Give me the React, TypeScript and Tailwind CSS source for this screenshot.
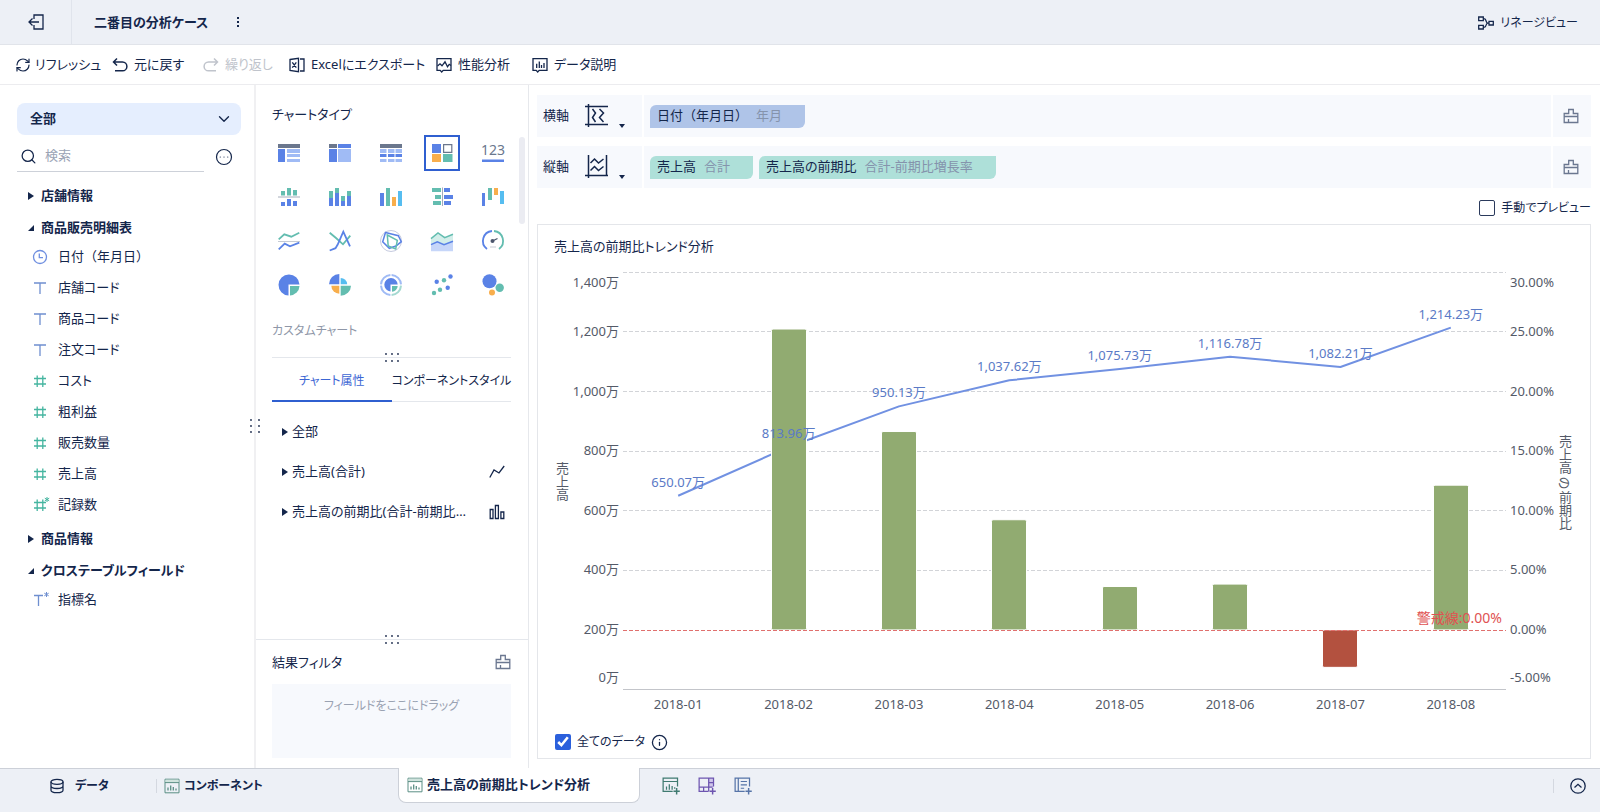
import React from 'react';
import { ChevronDown, CircleEllipsis, Info, RefreshCw, Search } from 'lucide-react';

const BLUE = '#5a82e6';
const LIGHT = '#a0bbf5';
const TEAL = '#63bdb0';
const ORANGE = '#f8ae4c';
const SKY = '#56bdf0';
const GREY = '#6b778d';

type IconProps = { children: React.ReactNode; size?: number; className?: string };

function Icon({ children, size = 16, className = '' }: IconProps) {
  return (
    <svg
      width={size}
      height={size}
      viewBox="0 0 16 16"
      fill="none"
      stroke="currentColor"
      strokeWidth="1.3"
      className={`shrink-0 ${className}`}
      aria-hidden="true">
      {children}
    </svg>
  );
}

const ExitIcon = () => (
  <Icon>
    <path d="M6 5V1h9v14H6v-4M1 8h10M4.500 4.500L1 8l3.500 3.500" />
  </Icon>
);

const LineageIcon = () => (
  <Icon>
    <path d="M.7 2h4.600v3.600H.7zM.7 10.400h4.600V14H.7zM11 6.400h4.300v3.600H11zM5.300 3.800h1.400c1.400 0 1.200 4.300 3 4.300H11M5.300 12.200h1.400c1.400 0 1.200-4.100 3-4.100" />
  </Icon>
);

const UndoIcon = ({ className = '' }: { className?: string }) => (
  <Icon className={className}>
    <path d="M5 1.500L1.500 5 5 8.500M1.500 5h9a4.300 4.300 0 0 1 0 8.800H3" strokeWidth="1.500" />
  </Icon>
);

const ExcelIcon = () => (
  <Icon>
    <path d="M1 2.500l8.500-1.200v13.400L1 13.500zM3.300 5.300l4 5.400M7.300 5.300l-4 5.400M11 2h4v12h-4" />
  </Icon>
);

const PerformanceIcon = () => (
  <Icon>
    <path d="M1 1.700h14v11.600H7.200L5.700 15l-1.500-1.700H1z" />
    <path d="M1.500 9l2.500-2.200 2 2L9 4.800l2.500 5 1.700-2.500L15 8.500" />
  </Icon>
);

const DataNoteIcon = () => (
  <Icon>
    <path d="M1 1.700h14v11.600H7.200L5.700 15l-1.500-1.700H1zM4.700 6.700V11M7.300 4.500V11M9.500 8v3M12 6v5" />
  </Icon>
);

const BrushIcon = () => (
  <Icon className="text-[#6b7790]">
    <path d="M1.200 14.500V5.500h4.500v-4h4.600v4h4.500v9zM1.200 8.500h13.600M5.500 11v3.500" />
  </Icon>
);

const ClockIcon = () => (
  <Icon className="text-[#6f8fe0]">
    <circle cx="8" cy="8" r="6.500" />
    <path d="M7.300 4.500v4.200H11" />
  </Icon>
);

const TextIcon = ({ star }: { star?: boolean }) => (
  <Icon className="overflow-visible text-[#6f8fd0]">
    <path d={star ? 'M2 3.500h9M6.500 3.500V14' : 'M2 3h12M8 3v11'} />
    {star && <path d="M14.500 0v5M12.300 1.200l4.400 2.600M16.700 1.200l-4.400 2.600" strokeWidth="1" />}
  </Icon>
);

const NumberIcon = ({ star }: { star?: boolean }) => (
  <Icon className="overflow-visible text-[#45b5a0]">
    <path d="M5.200 2.500v11.500M10.800 2.500v11.500M2 5.500h12M2 11h12" />
    {star && <path d="M15 0v5M12.800 1.200l4.400 2.600M17.200 1.200l-4.400 2.600" strokeWidth="1" />}
  </Icon>
);

const DatabaseIcon = () => (
  <Icon>
    <ellipse cx="8" cy="3.800" rx="6" ry="2.500" />
    <path d="M2 3.800v8.400c0 3.300 12 3.300 12 0V3.800M2 8c0 3.300 12 3.300 12 0" />
  </Icon>
);

const ComponentIcon = () => (
  <Icon className="text-[#5b8f85]">
    <path d="M1 1.200h14v13.600H1z" strokeWidth="1" />
    <path d="M1.500 1.700h13v2.600h-13z" fill="#cfe3dd" stroke="none" />
    <path d="M1 4.600h14" strokeWidth="1" />
    <path d="M4 9.500v3M6.700 7.500v5M9.300 9v3.500M12 10.500v2" />
  </Icon>
);

const AddComponentIcon = () => (
  <Icon size={18} className="text-[#3f7a70]">
    <path d="M9.500 12.800H1V1h12.800v7.500M1 4h12.800M4 8.500v2.800M6.500 6.500v4.800M9 8v3.300M11.300 9v1.500" strokeWidth="1.100" />
    <path d="M13 9.800v5.700M10.200 12.600h5.600" />
  </Icon>
);

const AddDashboardIcon = () => (
  <Icon size={18} className="text-[#6d55b0]">
    <path d="M9.500 1h4.300v8H9.500z" fill="#cfc6ea" stroke="none" />
    <path d="M9.500 12.800H1V1h12.800v7.500M1 9h12M9.500 1v11.500M9.500 5h4M5 9v3.800" strokeWidth="1.100" />
    <path d="M13 9.800v5.700M10.200 12.600h5.600" />
  </Icon>
);

const AddReportIcon = () => (
  <Icon size={18} className="text-[#5674a8]">
    <path d="M9.500 12.800H1V1h12.800v7.500M3.800 1v11.800M6 4h5.500M6 7h5.500M6 10h3" strokeWidth="1.100" />
    <path d="M13 9.800v5.700M10.200 12.600h5.600" />
  </Icon>
);

// one drawing per entry of the chart type palette, on a 22 x 22 field
const chartTypes: { name: string; art: React.ReactNode }[] = [
  {
    name: 'グループ表',
    art: (
      <>
        <path fill={GREY} d="M0 2h22v4H0z" />
        <path fill={BLUE} d="M0 7h7v13H0z" />
        <path fill={LIGHT} d="M9 7h13v4H9zM9 12h13v3H9zM9 17h13v3H9z" />
      </>
    ),
  },
  {
    name: 'クロス表',
    art: (
      <>
        <path fill={GREY} d="M0 2h8v4H0z" />
        <path fill={BLUE} d="M9 2h13v4H9zM0 7h8v13H0z" />
        <path fill={LIGHT} d="M9 7h13v13H9z" />
      </>
    ),
  },
  {
    name: '明細表',
    art: (
      <>
        <path fill={GREY} d="M0 2h22v4H0z" />
        <path fill={LIGHT} d="M0 7h6.500v4H0zM8 7h6.500v4H8zM15.500 7H22v4h-6.500zM0 17h6.500v3H0zM8 17h6.500v3H8zM15.500 17H22v3h-6.500z" />
        <path fill={BLUE} d="M0 12h6.500v3H0zM8 12h6.500v3H8zM15.500 12H22v3h-6.500z" />
      </>
    ),
  },
  {
    name: 'カスタム',
    art: (
      <>
        <path fill={BLUE} d="M1 2h9v9H1z" />
        <path fill="#fff" stroke={GREY} strokeWidth="1.200" d="M12.600 2.600h8.200v7.800h-8.200z" />
        <path fill={ORANGE} d="M1 12h9v8H1z" />
        <path fill={TEAL} d="M12 12h9.500v8H12z" />
      </>
    ),
  },
  {
    name: '指標カード',
    art: (
      <>
        <text x="11" y="13" textAnchor="middle" fontSize="14" fill={GREY}>
          123
        </text>
        <path fill={BLUE} d="M0 17.500h22v2.500H0z" />
      </>
    ),
  },
  {
    name: '対称棒グラフ',
    art: (
      <>
        <path fill={TEAL} d="M3 5h4v4.500H3zM9 2h4v7.500H9zM15 4h4v5.500h-4z" />
        <path fill="#a4acbb" d="M0 10.500h22v1H0z" />
        <path fill={BLUE} d="M3 16h4v4H3zM9 13h4v7H9zM15 15h4v5h-4z" />
      </>
    ),
  },
  {
    name: '積上げ棒グラフ',
    art: (
      <>
        <path fill={TEAL} d="M0 5h4v7H0zM6 2h4v5H6zM12 10h4v5h-4zM18 5h4v5h-4z" />
        <path fill={BLUE} d="M0 12h4v8H0zM6 7h4v13H6zM12 15h4v5h-4zM18 10h4v10h-4z" />
      </>
    ),
  },
  {
    name: '棒グラフ',
    art: (
      <>
        <path fill={BLUE} d="M0 7h4v13H0z" />
        <path fill={TEAL} d="M6 2h4v18H6z" />
        <path fill={ORANGE} d="M12 11h4v9h-4z" />
        <path fill={SKY} d="M18 5h4v15h-4z" />
      </>
    ),
  },
  {
    name: '双方向グラフ',
    art: (
      <>
        <path fill={TEAL} d="M1 2h9v4H1zM4 9h6v4H4zM2 15h8v4H2z" />
        <path fill="#a4acbb" d="M11 1.500h1v18.500h-1z" />
        <path fill={BLUE} d="M13 2h6v4h-6zM13 9h9v4h-9zM13 15h7v4h-7z" />
      </>
    ),
  },
  {
    name: '範囲棒グラフ',
    art: (
      <>
        <path fill={BLUE} d="M0 7h3v13H0z" />
        <path fill={TEAL} d="M6 2h4v12H6z" />
        <path fill={ORANGE} d="M12 2h4v7h-4z" />
        <path fill={SKY} d="M18 5h4v13h-4z" />
      </>
    ),
  },
  {
    name: '折れ線グラフ',
    art: (
      <g fill="none" strokeWidth="1.800">
        <path stroke={TEAL} d="M.7 9.300l5.600-5 7 2.400 8-4" />
        <path stroke="#c6cbd4" strokeWidth="1" d="M0 11.500h22" />
        <path stroke={BLUE} d="M.7 19.300l6-5.600 5.300 2.600 9.300-3.600" />
      </g>
    ),
  },
  {
    name: '曲線グラフ',
    art: (
      <g fill="none" strokeWidth="1.800">
        <path stroke={TEAL} d="M.7 2.700L7 8l7 6.300 7.300-8.600" />
        <path stroke={BLUE} d="M.7 20.500l5.800-2.300 2.200-3.700 5.600-12.800L21 16.300" />
      </g>
    ),
  },
  {
    name: 'レーダー',
    art: (
      <g fill="none" strokeWidth="1.500">
        <circle cx="11" cy="11" r="10.500" stroke="#c6cbe0" strokeWidth="1" />
        <path stroke={BLUE} d="M5.500 2.500l12.800 3.200 3 6-5.300 4.300-6.700 2.300-6.600-6.600z" />
        <path stroke={TEAL} d="M7.300 5l10 5.300-1.600 8.700-7.500-3z" />
      </g>
    ),
  },
  {
    name: 'エリア',
    art: (
      <>
        <path fill="#d3eeea" d="M0 8.600L7 3l6.700 4.700L22 4.300V15H0z" />
        <path fill="#c6d6f9" d="M0 14.600l6.300-2.900 6.700 3 9-3.400v10H0z" />
        <path fill="none" stroke={TEAL} strokeWidth="1.500" d="M0 8.600L7 3l6.700 4.700L22 4.300" />
        <path fill="none" stroke={BLUE} strokeWidth="1.500" d="M0 14.600l6.300-2.900 6.700 3 9-3.400" />
      </>
    ),
  },
  {
    name: 'ゲージ',
    art: (
      <>
        <g fill="none" strokeWidth="1.800">
          <path stroke={BLUE} d="M5 19A10 10 0 0 1 10 1" />
          <path stroke={TEAL} d="M12 1a10 10 0 0 1 5 18" />
          <path stroke="#c6cbd4" strokeWidth="1" d="M8 17h6" />
        </g>
        <circle cx="10.500" cy="11" r="2" fill="#4b566c" />
        <path stroke="#4b566c" strokeWidth="1.300" d="M10.500 11l5-2.500" />
      </>
    ),
  },
  {
    name: '円グラフ',
    art: (
      <>
        <path fill={BLUE} d="M10.500 21.500A10.500 10.500 0 1 1 21.500 10.500h-11z" />
        <path fill={TEAL} d="M12 12h9.500a10 10 0 0 1-9.500 9.500z" />
      </>
    ),
  },
  {
    name: 'ローズ',
    art: (
      <>
        <path fill={BLUE} d="M10.300 10.300H0A10.300 10.300 0 0 1 10.300 0z" />
        <path fill={SKY} d="M11.700 10.300V4a6.500 6.500 0 0 1 6.500 6.300z" />
        <path fill={TEAL} d="M11.700 11.700H22a10.300 10.300 0 0 1-10.300 10z" />
        <path fill={ORANGE} d="M10.300 11.700v8a8 8 0 0 1-8-8z" />
      </>
    ),
  },
  {
    name: '多層円グラフ',
    art: (
      <>
        <g fill="none" strokeWidth="2">
          <path stroke={LIGHT} d="M10.400 21A10 10 0 0 1 1 11.600M1 10.400A10 10 0 0 1 10.400 1M11.600 1A10 10 0 0 1 21 10.400" />
          <path stroke="#a5d9d1" d="M21 11.600A10 10 0 0 1 11.600 21" />
        </g>
        <path fill={BLUE} d="M10.500 17.500A6.700 6.700 0 1 1 17.700 10.500h-7.200z" />
        <path fill={TEAL} d="M12 12h5.700a6 6 0 0 1-5.700 5.700z" />
      </>
    ),
  },
  {
    name: '散布図',
    art: (
      <>
        <g fill={BLUE}>
          <circle cx="19.500" cy="2.500" r="2.200" />
          <circle cx="5.700" cy="7.700" r="2.200" />
          <circle cx="16.700" cy="13.700" r="2.200" />
        </g>
        <g fill={TEAL}>
          <circle cx="13" cy="6.300" r="2.200" />
          <circle cx="9" cy="15.700" r="2.200" />
          <circle cx="3" cy="19" r="2.200" />
        </g>
      </>
    ),
  },
  {
    name: 'バブル',
    art: (
      <>
        <circle cx="7.500" cy="7.300" r="7" fill={BLUE} />
        <circle cx="17.700" cy="13.700" r="4.200" fill={TEAL} />
        <circle cx="10" cy="18.500" r="3" fill={ORANGE} />
      </>
    ),
  },
];

// full-width parentheses keep their full advance
const DateLabel = () => <span className="[font-feature-settings:normal]">日付（年月日）</span>;

type Field = { key: string; label?: React.ReactNode; icon: React.ReactNode };

const fieldGroups: { label: string; fields: Field[] }[] = [
  { label: '店舗情報', fields: [] },
  {
    label: '商品販売明細表',
    fields: [
      { key: '日付', label: <DateLabel />, icon: <ClockIcon /> },
      { key: '店舗コード', icon: <TextIcon /> },
      { key: '商品コード', icon: <TextIcon /> },
      { key: '注文コード', icon: <TextIcon /> },
      { key: 'コスト', icon: <NumberIcon /> },
      { key: '粗利益', icon: <NumberIcon /> },
      { key: '販売数量', icon: <NumberIcon /> },
      { key: '売上高', icon: <NumberIcon /> },
      { key: '記録数', icon: <NumberIcon star /> },
    ],
  },
  { label: '商品情報', fields: [] },
  { label: 'クロステーブルフィールド', fields: [{ key: '指標名', icon: <TextIcon star /> }] },
];

function Caret({ open }: { open?: boolean }) {
  return (
    <svg width="8" height="8" viewBox="0 0 8 8" fill="currentColor" className="shrink-0" aria-hidden="true">
      <path d={open ? 'M6 1v6H0z' : 'M0 0l6 4-6 4z'} />
    </svg>
  );
}

function Grip({ vertical }: { vertical?: boolean }) {
  const dots = vertical
    ? [[1, 1], [9, 1], [1, 7], [9, 7], [1, 13], [9, 13]]
    : [[1, 1], [7, 1], [13, 1], [1, 8], [7, 8], [13, 8]];
  return (
    <svg width={vertical ? 10 : 14} height={vertical ? 14 : 9} fill="#1b2b4d" aria-hidden="true">
      {dots.map(([x, y]) => (
        <circle key={`${x}-${y}`} cx={x} cy={y} r="0.900" />
      ))}
    </svg>
  );
}

function Header() {
  return (
    <header className="flex h-[45px] shrink-0 items-center border-b border-[#e1e4ea] bg-[#edf0f6]">
      <button aria-label="戻る" className="flex h-full w-[72px] items-center justify-center border-r border-[#e0e4ec]">
        <ExitIcon />
      </button>
      <h1 className="ml-[22px] pt-0.5 font-bold">二番目の分析ケース</h1>
      <button aria-label="メニュー" className="ml-[18px] flex w-6 justify-center">
        <svg width="3" height="11" fill="currentColor" aria-hidden="true">
          <path d="M0 0h2v2H0zM0 4h2v2H0zM0 8h2v2H0z" />
        </svg>
      </button>
      <button className="mr-[22px] ml-auto flex items-center gap-1.5 pt-0.5 text-xs">
        <LineageIcon />
        リネージビュー
      </button>
    </header>
  );
}

function Toolbar() {
  return (
    <nav className="flex h-10 shrink-0 items-center border-b border-[#ececef] px-[15px] whitespace-nowrap">
      <button className="flex w-[97px] items-center gap-1">
        <RefreshCw size={16} strokeWidth={1.8} />
        リフレッシュ
      </button>
      <button className="flex w-[91px] items-center gap-1.5">
        <UndoIcon />
        元に戻す
      </button>
      <button disabled className="flex w-[86px] items-center gap-1.5 text-[#c0c4cc]">
        <UndoIcon className="-scale-x-100" />
        繰り返し
      </button>
      <button className="flex w-[147px] items-center gap-1.5">
        <ExcelIcon />
        Excelにエクスポート
      </button>
      <button className="flex w-24 items-center gap-1.5">
        <PerformanceIcon />
        性能分析
      </button>
      <button className="flex items-center gap-1.5">
        <DataNoteIcon />
        データ説明
      </button>
    </nav>
  );
}

function FieldPanel() {
  return (
    <aside className="relative w-64 shrink-0 border-r-2 border-[#f0f0f2] pt-[18px] pr-[13px] pl-[17px]">
      <div className="relative">
        <select
          aria-label="テーブル"
          className="h-8 w-full appearance-none rounded-lg bg-[#e5eefe] px-[13px] font-bold">
          <option>全部</option>
        </select>
        <ChevronDown size={18} strokeWidth={1.8} className="pointer-events-none absolute top-[7px] right-2" />
      </div>
      <div className="mt-1 flex items-center justify-between pr-2">
        <label className="flex h-[33px] w-[187px] items-center gap-2 border-b border-[#cdd1d9] pt-0.5 pl-[3px]">
          <Search size={17} strokeWidth={1.8} className="shrink-0" />
          <input
            aria-label="検索"
            placeholder="検索"
            className="w-full bg-transparent outline-none placeholder:text-[#9aa3b5]"
          />
        </label>
        <button aria-label="その他" className="pt-0.5">
          <CircleEllipsis size={18} strokeWidth={1.6} />
        </button>
      </div>
      <div className="mt-[11px] pl-[11px]">
        {fieldGroups.map((group) => (
          <section key={group.label}>
            <button className="mt-1.5 flex h-[25px] items-center gap-[5px] font-bold">
              <Caret open={group.fields.length > 0} />
              {group.label}
            </button>
            <ul className="pt-px">
              {group.fields.map((field) => (
                <li key={field.key} className="flex h-[31px] items-center gap-[10px] pl-1">
                  {field.icon}
                  {field.label ?? field.key}
                </li>
              ))}
            </ul>
          </section>
        ))}
      </div>
      <div className="absolute top-[334px] -right-1.5">
        <Grip vertical />
      </div>
    </aside>
  );
}

function SettingsPanel() {
  return (
    <section className="flex w-[273px] shrink-0 flex-col border-r border-[#e6e8ec]">
      <div className="relative mr-[17px] ml-4 h-[273px] border-b border-[#e4e7ec] pt-[19px]">
        <h2 className="leading-5">チャートタイプ</h2>
        <div className="-ml-[9px] grid w-[256px] grid-cols-5 gap-y-2 pt-[11px]">
          {chartTypes.map((type) => (
            <button
              key={type.name}
              title={type.name}
              aria-label={type.name}
              className={
                type.name === 'カスタム'
                  ? 'mx-auto flex size-9 items-center justify-center border-2 border-[#2f5fd0]'
                  : 'mx-auto flex size-9 items-center justify-center'
              }>
              <svg width="22" height="22" viewBox="0 0 22 22" className="overflow-visible" aria-hidden="true">
                {type.art}
              </svg>
            </button>
          ))}
        </div>
        <p className="mt-[18px] text-xs leading-5 text-[#8f97a8]">カスタムチャート</p>
        <div className="absolute top-[52px] -right-[14px] h-[87px] w-1.5 rounded-full bg-[#ebecf2]" />
        <div className="absolute -bottom-[5px] left-[113px]">
          <Grip />
        </div>
      </div>
      <div role="tablist" className="mr-[17px] ml-4 flex h-11 shrink-0 border-b border-[#e4e7ec] text-xs">
        <button
          role="tab"
          aria-selected="true"
          className="-mb-px w-1/2 border-b-2 border-[#2f5fd0] pt-1 text-[#3c66d4]">
          チャート属性
        </button>
        <button role="tab" aria-selected="false" className="w-1/2 pt-0.5 whitespace-nowrap">
          コンポーネントスタイル
        </button>
      </div>
      <ul className="mr-[23px] ml-[26px] pt-[10px]">
        <li className="flex h-10 items-center gap-0.5">
          <Caret />
          全部
        </li>
        <li className="flex h-10 items-center gap-0.5">
          <Caret />
          <span className="mr-auto">売上高(合計)</span>
          <Icon>
            <path d="M.8 13.500L5 6l5 3 5.200-7" />
          </Icon>
        </li>
        <li className="flex h-10 items-center gap-0.5">
          <Caret />
          <span className="mr-auto truncate">売上高の前期比(合計-前期比増長率)</span>
          <Icon className="ml-[13px]">
            <path d="M1.200 5.500h2.800v9H1.200zM6.400 1.500h3v13h-3zM11.900 8h2.900v6.500h-2.900z" />
          </Icon>
        </li>
      </ul>
      <div className="relative mt-auto border-t border-[#e4e7ec] pt-3 pr-[17px] pb-[10px] pl-4">
        <div className="absolute -top-[5px] left-[129px]">
          <Grip />
        </div>
        <div className="flex items-center justify-between">
          <h2 className="leading-5">結果フィルタ</h2>
          <button aria-label="クリア">
            <BrushIcon />
          </button>
        </div>
        <div className="mt-3 h-[74px] bg-[#f7f9fd] pt-3 text-center text-xs leading-5 text-[#9aa2b2]">
          フィールドをここにドラッグ
        </div>
      </div>
    </section>
  );
}

type Pill = { key: string; name: React.ReactNode; note: string; tone: string };

function Shelf({ label, icon, pills }: { label: string; icon: React.ReactNode; pills: Pill[] }) {
  return (
    <div className="flex h-[42px] gap-0.5">
      <div className="flex w-[105px] items-center bg-[#f7f9fd] pl-1.5">
        <span className="w-[42px] shrink-0">{label}</span>
        <button aria-label={`${label}の種類`} className="flex h-6 items-end gap-[10px]">
          {icon}
          <svg width="6" height="4" fill="currentColor" aria-hidden="true">
            <path d="M0 0h6L3 4z" />
          </svg>
        </button>
      </div>
      <div className="flex flex-1 items-center gap-1.5 bg-[#f7f9fd] px-1.5">
        {pills.map((pill) => (
          <span
            key={pill.key}
            className={`flex h-[23px] items-center gap-2 rounded-tl-md rounded-br-md pr-[23px] pl-[7px] ${pill.tone}`}>
            {pill.name}
            <span className="text-[#8593ac]">{pill.note}</span>
          </span>
        ))}
      </div>
      <button aria-label="クリア" className="flex w-[38px] items-center justify-center bg-[#f7f9fd] pr-0.5">
        <BrushIcon />
      </button>
    </div>
  );
}

// plot area of the chart
const LEFT = 85;
const RIGHT = 968;
const BOTTOM = 427.5;
const STEP = 59.6;
const ZERO = BOTTOM - STEP;

const months = [
  { month: '2018-01', sales: 650.07, text: '650.07万', rate: null },
  { month: '2018-02', sales: 813.96, text: '813.96万', rate: 25.2 },
  { month: '2018-03', sales: 950.13, text: '950.13万', rate: 16.6 },
  { month: '2018-04', sales: 1037.62, text: '1,037.62万', rate: 9.2 },
  { month: '2018-05', sales: 1075.73, text: '1,075.73万', rate: 3.6 },
  { month: '2018-06', sales: 1116.78, text: '1,116.78万', rate: 3.8 },
  { month: '2018-07', sales: 1082.21, text: '1,082.21万', rate: -3.1 },
  { month: '2018-08', sales: 1214.23, text: '1,214.23万', rate: 12.1 },
];

const salesTicks = ['0万', '200万', '400万', '600万', '800万', '1,000万', '1,200万', '1,400万'];
const rateTicks = ['-5.00%', '0.00%', '5.00%', '10.00%', '15.00%', '20.00%', '25.00%', '30.00%'];

const centerOf = (index: number) => LEFT + ((RIGHT - LEFT) / months.length) * (index + 0.5);
const salesY = (value: number) => BOTTOM - (value / 200) * STEP;

function tickY(index: number) {
  // the outer two labels are pulled inside the plot
  const shift = index === 0 ? -12 : index === 7 ? 11 : 0;
  return BOTTOM - STEP * index + shift + 4;
}

function Chart() {
  return (
    <svg viewBox="0 0 1052 460" className="min-h-0 w-full flex-1" role="img" aria-label="売上高の前期比トレンド分析">
      {salesTicks.slice(2).map((tick, i) => (
        <line
          key={tick}
          x1={LEFT}
          x2={RIGHT}
          y1={Math.floor(BOTTOM - STEP * (i + 2)) + 0.5}
          y2={Math.floor(BOTTOM - STEP * (i + 2)) + 0.5}
          stroke="#d2d4d8"
          strokeDasharray="4 2"
        />
      ))}
      <line x1={LEFT} x2={RIGHT} y1={BOTTOM} y2={BOTTOM} stroke="#c3c5ca" />
      <path
        d={months.map((m, i) => `${i ? 'L' : 'M'}${centerOf(i)} ${salesY(m.sales)}`).join('')}
        fill="none"
        stroke="#7191e2"
        strokeWidth="2"
        strokeLinejoin="round"
      />
      {months.map(
        (m, i) =>
          m.rate !== null && (
            <rect
              key={m.month}
              x={Math.round(centerOf(i)) - 17.5}
              width="35"
              y={m.rate > 0 ? ZERO - (m.rate / 5) * STEP - 0.5 : ZERO}
              height={(Math.abs(m.rate) / 5) * STEP + 0.5}
              rx="1.500"
              fill={m.rate > 0 ? '#91ab71' : '#b3513f'}
              stroke="#fff"
            />
          ),
      )}
      <line x1={LEFT} x2={RIGHT} y1="368.500" y2="368.500" stroke="#e0706e" strokeDasharray="4 2" />
      <g fontSize="13" fill="#545a68">
        {salesTicks.map((tick, i) => (
          <text key={tick} x="81" y={tickY(i)} textAnchor="end">
            {tick}
          </text>
        ))}
        {rateTicks.map((tick, i) => (
          <text key={tick} x="972" y={tickY(i)}>
            {tick}
          </text>
        ))}
        {months.map((m, i) => (
          <text key={m.month} x={centerOf(i)} y="447" textAnchor="middle">
            {m.month}
          </text>
        ))}
        <text x="24" y="200" className="[writing-mode:vertical-rl]">
          売上高
        </text>
        <text x="1027" y="173" className="[writing-mode:vertical-rl]">
          売上高
        </text>
        <text x="1027" y="226" textAnchor="middle" transform="rotate(90 1027 221)">
          の
        </text>
        <text x="1027" y="229" className="[writing-mode:vertical-rl]">
          前期比
        </text>
      </g>
      <g fontSize="13" fill="#5a7ac6" textAnchor="middle">
        {months.map((m, i) => (
          <text key={m.month} x={centerOf(i)} y={salesY(m.sales) - 9}>
            {m.text}
          </text>
        ))}
      </g>
      <text x="964" y="361" fontSize="14" fill="#e05252" textAnchor="end">
        警戒線:0.00%
      </text>
    </svg>
  );
}

function Workspace() {
  return (
    <main className="flex min-w-0 flex-1 flex-col pt-[10px] pr-[9px] pb-[9px] pl-2">
      <div className="flex flex-col gap-[9px]">
        <Shelf
          label="横軸"
          icon={
            <svg width="24" height="24" fill="none" stroke="currentColor" strokeWidth="1.500" aria-hidden="true">
              <path d="M0 2.500h23M0 20.500h23M3.500 0v23M7.500 5l3 4-3 4.500 3 4.500M14.500 5l4 4-4 4.500 4 4.500" />
            </svg>
          }
          pills={[{ key: '日付', name: <DateLabel />, note: '年月', tone: 'bg-[#afc4e8]' }]}
        />
        <Shelf
          label="縦軸"
          icon={
            <svg width="24" height="24" fill="none" stroke="currentColor" strokeWidth="1.500" aria-hidden="true">
              <path d="M3.500 0v23M21.500 0v20M0 20.500h23M5.500 8l4-4 4 4 5-4M5.500 15.500l4-4 4 4 5-4" />
            </svg>
          }
          pills={[
            { key: '売上高', name: '売上高', note: '合計', tone: 'bg-[#aee0d9]' },
            { key: '前期比', name: '売上高の前期比', note: '合計-前期比増長率', tone: 'bg-[#aee0d9]' },
          ]}
        />
      </div>
      <label className="flex h-9 items-center justify-end gap-1.5 pt-1 text-xs">
        <input type="checkbox" className="size-4 appearance-none rounded-xs border border-[#2b3a5c]" />
        手動でプレビュー
      </label>
      <div className="flex min-h-0 flex-1 flex-col border border-[#e4e6ea]">
        <h2 className="h-[37px] shrink-0 pt-[11px] pl-4 leading-5">売上高の前期比トレンド分析</h2>
        <Chart />
        <div className="flex h-9 shrink-0 items-center gap-1.5 pt-1 pl-[17px] text-xs">
          <label className="flex items-center gap-1.5">
            <input type="checkbox" defaultChecked className="size-4 accent-[#2b60dc]" />
            全てのデータ
          </label>
          <Info size={17} strokeWidth={1.8} />
        </div>
      </div>
    </main>
  );
}

function BottomBar() {
  return (
    <footer className="flex h-11 shrink-0 items-start border-t border-[#ccd0d8] bg-[#edf0f6] font-bold">
      <button className="flex h-[34px] w-[156px] items-center gap-[10px] pl-[49px] text-xs">
        <DatabaseIcon />
        データ
      </button>
      <div className="mt-[10px] h-3.5 w-px bg-[#d4d8e0]" />
      <button className="flex h-[34px] w-[241px] items-center gap-1 pl-[7px] text-xs">
        <ComponentIcon />
        コンポーネント
      </button>
      <button className="-mt-px flex h-[35px] w-[242px] items-center gap-1 rounded-b-lg border border-t-0 border-[#ccd0d8] bg-white pl-2">
        <ComponentIcon />
        売上高の前期比トレンド分析
      </button>
      <div className="flex h-[34px] items-center gap-[18px] pl-[22px]">
        <button aria-label="コンポーネントを追加">
          <AddComponentIcon />
        </button>
        <button aria-label="ダッシュボードを追加">
          <AddDashboardIcon />
        </button>
        <button aria-label="レポートを追加">
          <AddReportIcon />
        </button>
      </div>
      <div className="mr-[14px] ml-auto flex h-[34px] items-center gap-4">
        <div className="h-3.5 w-px bg-[#d4d8e0]" />
        <button aria-label="展開">
          <Icon>
            <circle cx="8" cy="8" r="7.200" />
            <path d="M4.500 9.500L8 6.300l3.500 3.200" />
          </Icon>
        </button>
      </div>
    </footer>
  );
}

function App() {
  return (
    <div className="flex h-screen flex-col bg-white font-['Noto_Sans','Noto_Sans_CJK_JP',sans-serif] text-[13px] text-[#14264b] [font-feature-settings:'palt']">
      <Header />
      <Toolbar />
      <div className="flex min-h-0 flex-1">
        <FieldPanel />
        <SettingsPanel />
        <Workspace />
      </div>
      <BottomBar />
    </div>
  );
}

export default App;
